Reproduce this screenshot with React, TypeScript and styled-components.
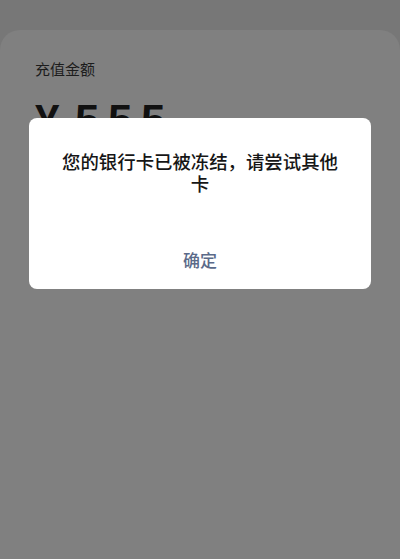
import React from "react";
import styled, { createGlobalStyle } from "styled-components";

const Global = createGlobalStyle`
  html, body { margin: 0; padding: 0; background: #777777; }
  body { font-family: "Noto Sans CJK SC", "Noto Sans", sans-serif; }
`;

const Screen = styled.div`
  position: relative;
  width: 400px;
  height: 559px;
  overflow: hidden;
  background: #777777;
  display: flex;
  flex-direction: column;
  padding-top: 30px;
  box-sizing: border-box;
`;

const Card = styled.div`
  flex: 1;
  background: #808080;
  border-radius: 20px 20px 0 0;
  padding: 24px 35px 0;
  display: flex;
  flex-direction: column;
`;

const Label = styled.div`
  font-size: 15px;
  line-height: 30px;
  color: #1c1c1c;
`;

const Amount = styled.div`
  margin-top: 12px;
  font-family: "Liberation Sans", Arial, sans-serif;
  font-weight: 700;
  font-size: 44px;
  line-height: 50px;
  letter-spacing: 8.5px;
  color: #111;
`;

const Currency = styled.span`
  margin-right: 7px;
`;

const Overlay = styled.div`
  position: absolute;
  left: 29px;
  top: 118px;
  width: 342px;
  background: #fff;
  border-radius: 8px;
  display: flex;
  flex-direction: column;
`;

const Message = styled.div`
  padding: 33px 28px 35px;
  text-align: center;
  font-size: 18.4px;
  font-weight: 500;
  line-height: 21.5px;
  color: #161616;
`;

const Action = styled.button`
  height: 60px;
  border: none;
  background: transparent;
  font-family: "Noto Sans CJK SC", sans-serif;
  font-size: 17px;
  font-weight: 500;
  color: #5b6a89;
  padding: 0;
`;

export default function App() {
  return (
    <>
      <Global />
      <Screen>
        <Card>
          <Label>充值金额</Label>
          <Amount>
            <Currency>¥</Currency>555
          </Amount>
        </Card>
        <Overlay>
          <Message>您的银行卡已被冻结，请尝试其他卡</Message>
          <Action>确定</Action>
        </Overlay>
      </Screen>
    </>
  );
}
